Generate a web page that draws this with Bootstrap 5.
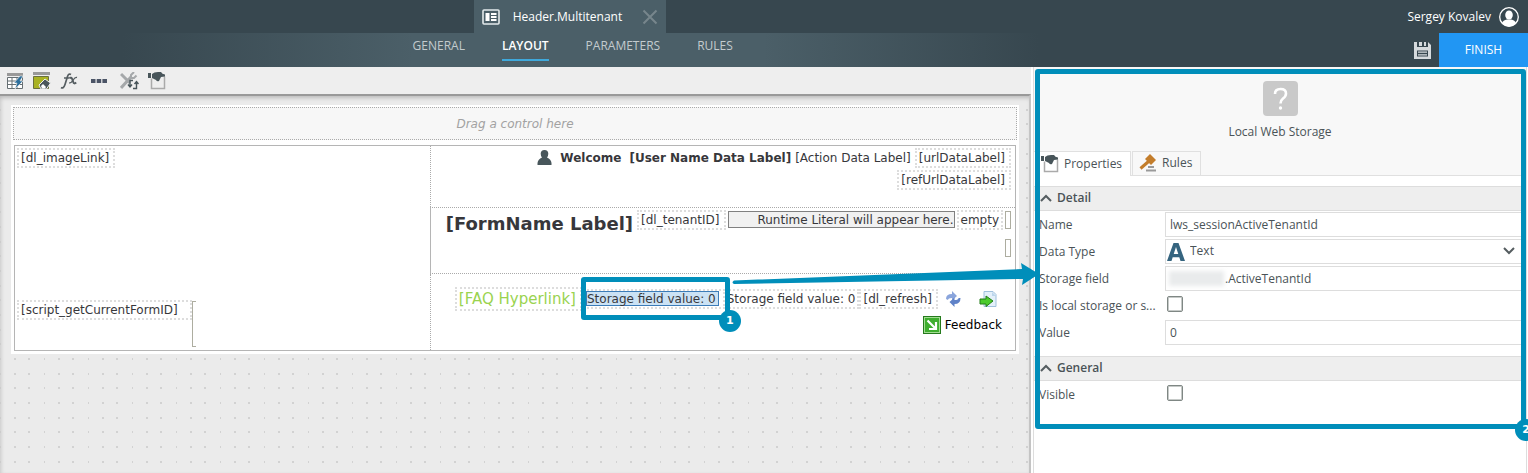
<!DOCTYPE html>
<html lang="en">
<head>
<meta charset="utf-8">
<meta name="viewport" content="width=device-width, initial-scale=1">
<title>Header.Multitenant</title>
<link href="https://cdn.jsdelivr.net/npm/bootstrap@5.3.0/dist/css/bootstrap.min.css" rel="stylesheet">
<script src="https://cdn.jsdelivr.net/npm/bootstrap@5.3.0/dist/js/bootstrap.bundle.min.js"></script>
<style>
  :root { --accent: #008eba; --slate: #37474f; --slate-2: #4b5f68; --line: #ddd; }
  body { font: 12px/16px "Open Sans", sans-serif; color: #4a5357; background: #fff; }
  svg { display: block; flex: none; }
  button { font: inherit; }
  .plain { background: none; border: 0; padding: 0; color: inherit; }

  /* top bars */
  .bar-top { background: var(--slate); height: 33px; color: #fff; }
  .spacer-tab { width: 31%; }
  .doc-tab { background: var(--slate-2); width: 192px; padding: 0 8px; gap: 13px; }
  .user-box { gap: 7px; }
  .bar-nav { height: 34px; background: linear-gradient(90deg, var(--slate) 8%, var(--slate-2) 27%, var(--slate-2) 50%, var(--slate) 68%); }
  .menu { margin-left: 27%; gap: 37px; }
  .menu a { color: #c3cbce; text-decoration: none; height: 28px; padding-top: 5px; border-bottom: 2px solid transparent; }
  .menu a.active { color: #fff; border-color: #3fa9dc; font-weight: 600; }
  .finish { background: #2196f3; color: #fff; border: 0; width: 89px; height: 34px; }

  /* designer */
  .workspace { min-width: 0; }
  .tools { height: 27px; background: #eee; padding: 0 7px; gap: 9px; }
  .board { border-top: 2px solid #999; border-right: 2px solid #c4c4c4; padding: 9px 10px 0 11px;
    box-shadow: inset 0 4px 4px -2px #bbb, inset 3px 0 4px -2px #ccc;
    background: #ebebeb url("data:image/svg+xml,%3Csvg xmlns='http://www.w3.org/2000/svg' width='44' height='44'%3E%3Cpath fill='%23d2d2d2' d='M0 0h1v2H0zM0 15h1v2H0zM0 29h1v2H0zM14 0h2v2h-2zM14 15h2v2h-2zM14 29h2v2h-2zM28 0h2v2h-2zM28 15h2v2h-2zM28 29h2v2h-2z'/%3E%3C/svg%3E") 0 -2px; }
  .sheet { background: #fff; padding: 2px 2px 3px; color: #37373b; font: 12px/16px "DejaVu Sans", Verdana, sans-serif; white-space: nowrap; }
  .drop { height: 33px; border: 1px dotted #aaa; background: #f7f7f7; color: #a2a2a2; }
  .form-grid { display: grid; grid-template-columns: 415fr 585fr; grid-template-rows: 61px 67px 76px; border: 1px solid #b5b5b5; margin: 5px 1px 0; }
  .cell-left { padding: 2px; }
  .cell-right { padding: 2px 4px 0 0; border-left: 1px dotted #aaa; gap: 2px; }
  .cell-mid { border-left: 1px solid #b5b5b5; border-top: 1px dotted #aaa; border-bottom: 1px dotted #aaa; }
  .span-rows { grid-row: span 2; }
  .script-cell { padding-top: 26px; }
  .tag { border: 2px dotted #ddd; padding: 0 4px 0 2px; height: 20px; line-height: 17px; }
  .tag-wide { padding-right: 12px; }
  .tag-tight { padding-right: 2px; }
  .literal { width: 227px; height: 17px; border: 1px solid #808080; background: #f1f1f1; text-align: right; line-height: 16px; margin: 1px 2px 0; }
  .slot { width: 6px; height: 18px; border: 1px solid #adada0; margin: 1px 0 0 2px; }
  .slot-open { width: 4px; height: 46px; border: 1px solid #adada0; border-right: 0; margin-top: 1px; }
  .form-title { font-size: 18px; line-height: 24px; font-weight: 700; margin: 2px 4px 0 0; }
  .faq { border: 2px dotted #ddd; padding: 0 4px 0 2px; height: 24px; line-height: 21px; color: #9ad34f; font-size: 15px; text-decoration: none; }
  .chosen { background: #cbe2f4; border: 1px solid #3b7cb8; height: 15px; line-height: 14px; display: block; padding-right: 2px; }
  .tag-storage { padding: 0 2px 0 0; }
  .cell-right.storage-links { padding-top: 13px; gap: 5px; }
  .storage-icons { gap: 18px; margin: 0 14px 0 7px; }
  .feedback { color: #000; text-decoration: none; margin-right: 9px; }
  .callout-box { position: absolute; inset: -14px -7px -13px -3px; border: 5px solid var(--accent); border-radius: 3px; }
  .pin { position: absolute; right: -16px; bottom: -17px; width: 22px; height: 22px; border-radius: 50%; background: var(--accent); color: #fff; font: 700 11px/22px "DejaVu Sans", sans-serif; text-align: center; }
  .arrow { position: absolute; right: -8px; top: 195px; z-index: 2; }

  /* properties panel */
  .side { flex: 0 0 497px; padding-left: 2px; }
  .side-in { border: 1px solid var(--line); border-width: 0 1px; margin-right: 1px; }
  .outlined { padding-bottom: 21px; }
  .side-head { background: #f8f8f8; height: 109px; padding-top: 14px; gap: 8px; border-bottom: 1px solid #e0e0e0; }
  .panel-tabs { gap: 1px; margin-top: -25px; }
  .panel-tabs button { border: 1px solid #e0e0e0; border-bottom: 0; background: #f8f8f8; height: 24px; padding: 0 8px 1px 6px; gap: 5px; color: inherit; }
  .panel-tabs button.active { background: #fff; border-left: 0; height: 25px; padding-left: 7px; }
  .group-head { height: 25px; background: #eee; border: 1px solid var(--line); border-width: 1px 0; padding: 0 0 2px 6px; gap: 5px; font-size: 12px; line-height: 16px; font-weight: 600; margin: 10px 0 0; }
  .prop { display: grid; grid-template-columns: 126px 1fr; height: 27px; align-items: center; padding-left: 5px; }
  .prop > label { padding-right: 6px; line-height: 20px; white-space: nowrap; }
  .field { height: 25px; border: 1px solid var(--line); border-radius: 0; padding: 0 4px 1px; color: #4a5357; background: #fff; width: 100%; font: inherit; }
  select.field { appearance: none; padding-left: 24px; }
  .tick { appearance: none; display: block; width: 16px; height: 16px; border: 1px solid #7f8784; box-shadow: inset 0 0 0 1px #c6cac8; border-radius: 2px; margin: 0 0 3px 2px; background: #fff; }
  .over { position: absolute; pointer-events: none; }
  .smudge { left: 4px; top: 5px; width: 55px; height: 15px; background: #e9ebec; filter: blur(2px); }
  .masked { padding-left: 59px; }
  .frame { position: absolute; inset: 2px 0 0 1px; border: 5px solid var(--accent); border-radius: 3px; pointer-events: none; }
</style>
</head>
<body class="vh-100 d-flex flex-column overflow-hidden">

<svg width="0" height="0" class="position-absolute" aria-hidden="true">
  <symbol id="i-props" viewBox="0 0 18 18"><path d="M3.500 6.500v10h13v-12" fill="none" stroke="#aaa" stroke-width="1.500"/><path d="M0 1h3v5H0zM4 2q2-2 6-2h3q1 2 4 2.500v2l-4 .5-2 4q-2 1-3-1L4 6z" fill="#48555a"/></symbol>
  <symbol id="i-up" viewBox="0 0 12 8"><path d="M1 7l5-5 5 5" fill="none" stroke="#555d60" stroke-width="2"/></symbol>
</svg>

<header>
  <div class="bar-top d-flex">
    <div class="spacer-tab"></div>
    <div class="doc-tab d-flex align-items-center">
      <svg width="18" height="16" viewBox="0 0 18 16"><rect x="1" y="1" width="16" height="14" rx="1" fill="none" stroke="#e4eaec" stroke-width="1.600"/><path d="M3.500 4h4v8h-4zM9 4h5.500v2H9zM9 7h5.500v2H9zM9 10h5.500v2H9z" fill="#fff"/></svg>
      <span>Header.Multitenant</span>
      <button class="plain ms-auto" aria-label="Close"><svg width="16" height="16" viewBox="0 0 16 16"><path d="M1.500 1.500l13 13m0-13l-13 13" stroke="#77868c" stroke-width="2"/></svg></button>
    </div>
    <div class="user-box ms-auto d-flex align-items-center pe-2">
      <span>Sergey Kovalev</span>
      <svg width="22" height="22" viewBox="0 0 22 22"><circle cx="11" cy="11" r="9.300" fill="none" stroke="#fff" stroke-width="1.300"/><ellipse cx="11" cy="9" rx="3.800" ry="4.600" fill="#fff"/><path d="M4 17q1-3 5-3.500h4q4 .5 5 3.500-3 3.500-7 3.500T4 17z" fill="#fff"/></svg>
    </div>
  </div>
  <div class="bar-nav d-flex">
    <nav class="menu d-flex">
      <a href="#">GENERAL</a>
      <a href="#" class="active">LAYOUT</a>
      <a href="#">PARAMETERS</a>
      <a href="#">RULES</a>
    </nav>
    <div class="ms-auto d-flex align-items-center gap-2">
      <button class="plain" aria-label="Save"><svg width="17" height="17" viewBox="0 0 17 17"><path d="M0 0h3v5h11V0l3 3v14H0z" fill="#d5dadd"/><path d="M5 0h3v4H5zM10 0h2v4h-2z" fill="#d5dadd"/><path d="M3 8.500h11v6H3z" fill="#37474f"/><path d="M4 9.500h9v1.300H4zM4 12.200h9v1.300H4z" fill="#d5dadd"/></svg></button>
      <button class="finish">FINISH</button>
    </div>
  </div>
</header>

<div class="d-flex flex-grow-1">
  <main class="workspace d-flex flex-column flex-grow-1 position-relative">
    <div class="tools d-flex align-items-center">
      <button class="plain" aria-label="Data source"><svg width="17" height="18" viewBox="0 0 17 18"><path d="M0 1h16v3H0z" fill="#999"/><path d="M.5 5.500h15v11H.5zM.5 9h15M.5 12.500h15M5 5.500v11M10 5.500v11" fill="#fff" stroke="#666f73"/><path d="M13 4l-6 7h3l-2 6 8-8h-3l3-5z" fill="#2d6f9c" stroke="#eee" stroke-width=".6"/></svg></button>
      <button class="plain" aria-label="Clear view"><svg width="18" height="18" viewBox="0 0 18 18"><path d="M0 0h17v3H0z" fill="#999"/><path d="M.5 4.500h15v12H.5z" fill="#a9b223" stroke="#6a7040"/><path d="M6 13l6-6 5.500 4-4 6H8z" fill="#4a565b" stroke="#eee"/><path d="M8 14l2-2 3 3-1 1.500H9z" fill="#fff"/></svg></button>
      <button class="plain" aria-label="Expression"><svg width="18" height="18" viewBox="0 0 18 18"><path d="M1 15.500q2.500 1.500 4-3l2.500-8q1.200-3.500 3.500-2M4 6h5.500" fill="none" stroke="#555d61" stroke-width="1.700"/><path d="M9.500 6q2-1 2.700 1l1 3q.8 2.500 3 .5" fill="none" stroke="#555d61" stroke-width="2"/><path d="M17 5.500q-2-.5-3.800 2.500t-4 3" fill="none" stroke="#555d61" stroke-width="1.300"/></svg></button>
      <button class="plain mx-1" aria-label="More"><svg width="16" height="18" viewBox="0 0 16 18"><path d="M0 7h4.500v4H0zM5.700 7h4.500v4H5.700zM11.400 7H16v4h-4.600z" fill="#4b5466"/></svg></button>
      <button class="plain" aria-label="Actions"><svg width="19" height="18" viewBox="0 0 19 18"><path d="M1 16L11 5M1 2l9 9" stroke="#a5a8aa" stroke-width="3"/><path d="M14 0l-3 3v3h3l2.500-2.500" fill="none" stroke="#a5a8aa" stroke-width="2"/><path d="M13 8.500h-3v6M8 12.500l2 2.500 2-2.500M13 16.500h3.500V10M14.500 12l2-2.500 2 2.500" fill="none" stroke="#48555a" stroke-width="1.400"/></svg></button>
      <button class="plain" aria-label="Properties"><svg width="18" height="18"><use href="#i-props"/></svg></button>
    </div>
    <div class="board flex-grow-1">
      <div class="sheet">
        <div class="drop d-flex align-items-center justify-content-center fst-italic">Drag a control here</div>
        <div class="form-grid">
          <div class="cell-left span-rows d-flex align-items-start"><span class="tag">[dl_imageLink]</span></div>
          <div class="cell-right d-flex flex-column align-items-end">
            <div class="d-flex align-items-center">
              <svg class="me-2" width="15" height="17" viewBox="0 0 15 17"><path d="M7.500 0a3.800 3.800 0 0 1 3.800 3.800Q11.300 6 10 7.500q4 1.500 4.500 5.500v2H.5v-2Q1 9 5 7.500 3.700 6 3.700 3.800A3.800 3.800 0 0 1 7.500 0z" fill="#48565b"/></svg>
              <b class="me-2">Welcome</b>
              <b class="me-1">[User Name Data Label]</b>
              <span class="me-1">[Action Data Label]</span>
              <span class="tag">[urlDataLabel]</span>
            </div>
            <span class="tag">[refUrlDataLabel]</span>
          </div>
          <div class="cell-right cell-mid d-flex flex-column align-items-end">
            <div class="d-flex">
              <span class="form-title">[FormName Label]</span>
              <span class="tag">[dl_tenantID]</span>
              <span class="literal">Runtime Literal will appear here.</span>
              <span class="tag tag-tight">empty</span>
              <span class="slot"></span>
            </div>
            <span class="slot"></span>
          </div>
          <div class="cell-left script-cell d-flex align-items-start">
            <span class="tag tag-wide">[script_getCurrentFormID]</span>
            <span class="slot-open"></span>
          </div>
          <div class="cell-right storage-links d-flex flex-column align-items-end">
            <div class="d-flex align-items-center">
              <a class="faq" href="#">[FAQ Hyperlink]</a>
              <span class="tag position-relative">
                <span class="chosen">Storage field value: 0</span>
                <span class="callout-box"><span class="pin">1</span></span>
              </span>
              <span class="tag tag-storage">Storage field value: 0</span>
              <span class="tag">[dl_refresh]</span>
              <span class="storage-icons d-flex">
                <svg width="16" height="16" viewBox="0 0 16 16"><path d="M1 8q0-5 6-5V0l5 5-5 4.500V7Q3 7 3 9z" fill="#8aa5dc"/><path d="M15.500 7q0 6-6 6v3l-5-5 5-4.500V9q4 0 4-2z" fill="#5f82c8"/></svg>
                <svg width="18" height="17" viewBox="0 0 18 17"><path d="M5 .5h9l3 3v12H5z" fill="#e4f0fa" stroke="#9fc0dc"/><path d="M13 1v4h4" fill="#bcd6ec"/><path d="M1 8h6V5l7 5-7 5.500V13H1z" fill="#4ccb2c" stroke="#227d18"/></svg>
              </span>
            </div>
            <a class="feedback d-flex align-items-center gap-1" href="#">
              <svg width="18" height="18" viewBox="0 0 18 18"><rect x=".5" y=".5" width="17" height="17" fill="#3fae2e" stroke="#257a1c"/><rect x="1.500" y="1.500" width="15" height="15" fill="none" stroke="#a3dc93"/><path d="M4.500 4.500l7.500 7.500M13 6v7H6" fill="none" stroke="#fff" stroke-width="2.200"/></svg>
              Feedback
            </a>
          </div>
        </div>
      </div>
    </div>
    <svg class="arrow" width="307" height="32" viewBox="0 0 307 32"><path d="M2 18.500L290 7 289 1l18 11-17 11 1-6L2 22q-3-1.500 0-3.500z" fill="#008eba"/></svg>
  </main>

  <aside class="side d-flex flex-column">
    <div class="side-in flex-grow-1">
      <div class="outlined position-relative">
        <div class="side-head d-flex flex-column align-items-center">
          <svg width="35" height="35" viewBox="0 0 35 35"><rect width="35" height="35" rx="4" fill="#c9c9c9"/><path d="M12 13q0-5 5.500-5t5.500 4.500q0 3-3 5-2.500 2-2.500 5" fill="none" stroke="#fff" stroke-width="2.600"/><circle cx="17.500" cy="27" r="1.700" fill="#fff"/></svg>
          <span>Local Web Storage</span>
        </div>
        <div class="panel-tabs d-flex position-relative">
          <button class="active d-flex align-items-center"><svg width="18" height="18"><use href="#i-props"/></svg>Properties</button>
          <button class="d-flex align-items-center"><svg width="18" height="18" viewBox="0 0 18 18"><path d="M1.500 14.500l8-7" stroke="#c37d2b" stroke-width="3"/><path d="M6 5l5-5 6 6-5 5z" fill="#c37d2b"/><path d="M9 12h6v2H9zM7 15.500h10v2H7z" fill="#999"/></svg>Rules</button>
        </div>
        <h2 class="group-head d-flex align-items-center"><svg width="12" height="8"><use href="#i-up"/></svg>Detail</h2>
        <div class="prop"><label for="f-name">Name</label><input id="f-name" class="field" value="lws_sessionActiveTenantId"></div>
        <div class="prop"><label for="f-type">Data Type</label>
          <div class="position-relative">
            <select id="f-type" class="field"><option>Text</option></select>
            <svg class="over top-0 start-0" width="22" height="24" viewBox="0 0 22 24"><path d="M2 22L8.500 4h5L20 22h-4.500l-1.200-3.800H7.700L6.500 22zM8.700 15h4.600L11 8z" fill="#35647f"/></svg>
            <svg class="over top-0 end-0 me-2" width="16" height="24" viewBox="0 0 16 24"><path d="M2 9l5 5 5-5" fill="none" stroke="#555d60" stroke-width="2"/></svg>
          </div>
        </div>
        <div class="prop"><label for="f-store">Storage field</label>
          <div class="position-relative"><input id="f-store" class="field masked" value=".ActiveTenantId"><span class="over smudge"></span></div>
        </div>
        <div class="prop"><label for="f-local">Is local storage or s...</label><input id="f-local" class="tick" type="checkbox"></div>
        <div class="prop"><label for="f-value">Value</label><input id="f-value" class="field" value="0"></div>
        <h2 class="group-head d-flex align-items-center"><svg width="12" height="8"><use href="#i-up"/></svg>General</h2>
        <div class="prop"><label for="f-visible">Visible</label><input id="f-visible" class="tick" type="checkbox"></div>
        <div class="frame"><span class="pin">2</span></div>
      </div>
    </div>
  </aside>
</div>
</body>
</html>
